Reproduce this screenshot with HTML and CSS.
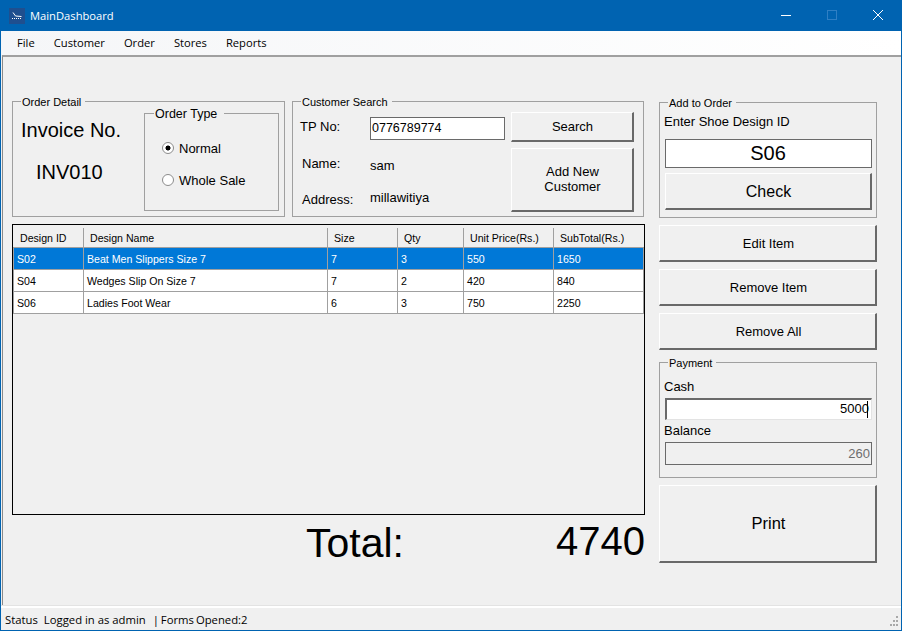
FILE: index.html
```html
<!DOCTYPE html>
<html lang="en">
<head>
  <meta charset="UTF-8">
  <meta name="viewport" content="width=device-width, initial-scale=1.0">
  <title>MainDashboard</title>
  <link rel="stylesheet" href="styles.css">
</head>
<body>
  <div class="window">
    <div class="titlebar">
      <svg class="app-icon" width="16" height="16" viewBox="0 0 16 16">
        <rect width="16" height="16" fill="#1f4f8f"/>
        <path d="M4 4.5 L6.5 8 L12.5 8.5" stroke="#fff" fill="none"/>
        <path d="M3 10.5 H13" stroke="#fff" stroke-dasharray="1 1"/>
      </svg>
      <span class="title-text">MainDashboard</span>
      <div class="controls">
        <svg width="46" height="31" viewBox="0 0 46 31"><path d="M18 15.5 H28" stroke="#fff"/></svg>
        <svg width="46" height="31" viewBox="0 0 46 31"><rect x="18.5" y="10.5" width="9" height="9" stroke="#2f7fc4" fill="none"/></svg>
        <svg width="46" height="31" viewBox="0 0 46 31"><path d="M18 10 L28 20 M28 10 L18 20" stroke="#fff" fill="none"/></svg>
      </div>
    </div>

    <div class="menubar">
      <span>File</span>
      <span>Customer</span>
      <span>Order</span>
      <span>Stores</span>
      <span>Reports</span>
    </div>

    <div class="frame">
      <div class="left-col">
        <div class="top-row">
          <fieldset class="group order-detail">
            <legend>Order Detail</legend>
            <div class="invoice">
              <div class="invoice-label">Invoice No.</div>
              <div class="invoice-no">INV010</div>
            </div>
            <fieldset class="group order-type">
              <legend>Order Type</legend>
              <div class="radio-row first"><span class="radio checked"></span>Normal</div>
              <div class="radio-row"><span class="radio"></span>Whole Sale</div>
            </fieldset>
          </fieldset>

          <fieldset class="group customer-search">
            <legend>Customer Search</legend>
            <div class="cust-info">
              <div class="cust-row tp">
                <span class="cust-label">TP No:</span>
                <div class="field tp-field">0776789774</div>
              </div>
              <div class="cust-row name">
                <span class="cust-label shift">Name:</span>
                <span class="cust-value low">sam</span>
              </div>
              <div class="cust-row address">
                <span class="cust-label shift low">Address:</span>
                <span class="cust-value">millawitiya</span>
              </div>
            </div>
            <div class="cust-buttons">
              <div class="btn search-btn">Search</div>
              <div class="btn add-btn">Add New<br>Customer</div>
            </div>
          </fieldset>
        </div>

        <div class="grid-wrap">
          <table class="grid">
            <colgroup>
              <col class="c1"><col class="c2"><col class="c3"><col class="c4"><col class="c5"><col class="c6">
            </colgroup>
            <thead>
              <tr>
                <th>Design ID</th><th>Design Name</th><th>Size</th><th>Qty</th><th>Unit Price(Rs.)</th><th>SubTotal(Rs.)</th>
              </tr>
            </thead>
            <tbody>
              <tr class="selected">
                <td>S02</td><td>Beat Men Slippers Size 7</td><td>7</td><td>3</td><td>550</td><td>1650</td>
              </tr>
              <tr>
                <td>S04</td><td>Wedges Slip On Size 7</td><td>7</td><td>2</td><td>420</td><td>840</td>
              </tr>
              <tr>
                <td>S06</td><td>Ladies Foot Wear</td><td>6</td><td>3</td><td>750</td><td>2250</td>
              </tr>
            </tbody>
          </table>
        </div>

        <div class="total-row">
          <span class="total-label">Total:</span>
          <span class="total-value">4740</span>
        </div>
      </div>

      <div class="right-col">
        <fieldset class="group add-order">
          <legend>Add to Order</legend>
          <div class="side-label first">Enter Shoe Design ID</div>
          <div class="field design-field">S06</div>
          <div class="btn check-btn">Check</div>
        </fieldset>
        <div class="btn side-btn">Edit Item</div>
        <div class="btn side-btn">Remove Item</div>
        <div class="btn side-btn">Remove All</div>
        <fieldset class="group payment">
          <legend>Payment</legend>
          <div class="side-label cash">Cash</div>
          <div class="field cash-field">5000<span class="caret"></span></div>
          <div class="side-label balance">Balance</div>
          <div class="field balance-field">260</div>
        </fieldset>
        <div class="btn print-btn">Print</div>
      </div>
    </div>

    <div class="statusbar">
      <span class="status-first">Status</span>
      <span>Logged in as admin</span>
      <span class="status-forms">| Forms Opened:2</span>
      <svg class="grip" width="10" height="11" viewBox="0 0 10 11" fill="#a8a8a8">
        <rect x="7" y="0" width="2" height="2"/>
        <rect x="4" y="4" width="2" height="2"/><rect x="7" y="4" width="2" height="2"/>
        <rect x="1" y="8" width="2" height="2"/><rect x="4" y="8" width="2" height="2"/><rect x="7" y="8" width="2" height="2"/>
      </svg>
    </div>
  </div>
</body>
</html>
```

FILE: styles.css
```css
* {
  box-sizing: border-box;
}

body {
  margin: 0;
  background-color: #fff;
  font-family: "Liberation Sans", Arial, sans-serif;
  font-size: 13px;
  color: #000;
}

.window {
  display: flex;
  flex-direction: column;
  width: 902px;
  height: 631px;
  border-left: 1px solid #0063b1;
  border-right: 1px solid #0063b1;
  border-bottom: 1px solid #0063b1;
  background-color: #f0f0f0;
}

.titlebar {
  display: flex;
  align-items: center;
  height: 31px;
  flex: none;
  padding-left: 8px;
  background-color: #0063b1;
  color: #fff;
}

.title-text {
  margin-left: 5px;
  font-family: "Open Sans", sans-serif;
  font-size: 11.2px;
}

.controls {
  display: flex;
  margin-left: auto;
}

.controls svg {
  display: block;
}

.menubar {
  display: flex;
  gap: 19px;
  align-items: center;
  height: 24px;
  flex: none;
  padding: 0 0 2px 16px;
  background: linear-gradient(to right, #f5f6f8, #fff);
  font-family: "Open Sans", sans-serif;
  font-size: 11.2px;
}

.frame {
  display: grid;
  grid-template-columns: 633px 218px;
  column-gap: 14px;
  flex: 1;
  margin-left: 1px;
  padding: 38px 0 0 9px;
  border-top: 2px solid #a0a0a0;
  border-left: 1px solid #8a8a8a;
  background-color: #f0f0f0;
}

/* group boxes */
.group {
  min-width: 0;
  margin: 0;
  border: 1px solid #a0a0a0;
}

.group legend {
  padding: 2px 4px 0 1px;
  font-size: 11px;
  line-height: 11px;
}

.top-row {
  display: flex;
  gap: 7px;
}

.order-detail {
  display: flex;
  width: 273px;
  height: 122px;
  padding: 0 5px 0 9px;
}

.order-detail > legend {
  margin-left: -1px;
}

.invoice {
  width: 122px;
}

.invoice-label {
  margin-top: 10px;
  margin-left: -1px;
  font-size: 20px;
  line-height: 24px;
}

.invoice-no {
  margin-top: 18px;
  margin-left: 14px;
  font-size: 20px;
  line-height: 24px;
}

.order-type {
  width: 135px;
  height: 105px;
  margin-top: -2px;
  padding: 0 0 0 17px;
}

.order-type legend {
  margin-left: -8px;
  padding: 2px 7px 0 1px;
  font-size: 12.5px;
  line-height: 12px;
}

.radio-row {
  display: flex;
  align-items: center;
  gap: 5px;
  height: 16px;
  margin-top: 16px;
}

.radio-row.first {
  margin-top: 20px;
}

.radio {
  display: block;
  width: 12px;
  height: 12px;
  border: 1px solid #8c8c8c;
  border-radius: 50%;
  background-color: #fff;
}

.radio.checked {
  background: radial-gradient(circle, #000 0, #000 2.2px, #fff 2.8px);
}

.customer-search {
  display: flex;
  width: 352px;
  height: 122px;
  padding: 0 0 0 8px;
}

.cust-info {
  width: 210px;
}

.cust-row {
  display: grid;
  grid-template-columns: 69px 135px;
  line-height: 16px;
}

.cust-row.tp {
  align-items: center;
  margin-top: 9px;
}

.cust-row.tp .cust-label {
  margin-left: -1px;
  padding-bottom: 4px;
}

.cust-row.name {
  margin-top: 16px;
}

.cust-row.address {
  margin-top: 16px;
}

.cust-label.shift {
  margin-left: 1px;
}

.low {
  padding-top: 2px;
}

.cust-buttons {
  display: flex;
  flex-direction: column;
  gap: 6px;
  width: 123px;
  margin-top: 4px;
}

/* inputs */
.field {
  border: 1px solid #6a6a6a;
  background-color: #fff;
}

.tp-field {
  height: 23px;
  padding-left: 1px;
  font-size: 12.5px;
  line-height: 21px;
}

.design-field {
  height: 29px;
  margin-top: 10px;
  padding-right: 1px;
  font-size: 20px;
  line-height: 27px;
  text-align: center;
}

.cash-field {
  position: relative;
  height: 22px;
  margin-top: 4px;
  padding-right: 2px;
  border-width: 2px 1px 1px 2px;
  border-color: #6a6a6a #e3e3e3 #e3e3e3 #6a6a6a;
  line-height: 18px;
  text-align: right;
}

.caret {
  position: absolute;
  top: 1px;
  right: 3px;
  width: 1px;
  height: 17px;
  background-color: #000;
}

.balance-field {
  height: 23px;
  margin-top: 4px;
  padding-right: 1px;
  background-color: #f0f0f0;
  color: #6d6d6d;
  line-height: 21px;
  text-align: right;
}

/* buttons */
.btn {
  display: flex;
  align-items: center;
  justify-content: center;
  padding-left: 1px;
  border-style: solid;
  border-width: 1px 2px 2px 1px;
  border-color: #fff #696969 #696969 #fff;
  background-color: #f0f0f0;
  line-height: 15px;
  text-align: center;
}

.search-btn {
  height: 30px;
}

.add-btn {
  height: 64px;
  padding-bottom: 2px;
}

.check-btn {
  height: 37px;
  margin-top: 5px;
  font-size: 16px;
}

.side-btn {
  height: 37px;
  padding-left: 2px;
}

.print-btn {
  height: 78px;
  padding-left: 2px;
  font-size: 16.5px;
}

/* order lines */
.grid-wrap {
  height: 291px;
  margin-top: 7px;
  border: 1px solid #000;
  background-color: #f0f0f0;
}

.grid {
  width: 631px;
  table-layout: fixed;
  border-spacing: 0;
  font-size: 10.6px;
}

.c1 { width: 71px; }
.c2 { width: 244px; }
.c3 { width: 70px; }
.c4 { width: 66px; }
.c5 { width: 90px; }
.c6 { width: 90px; }

.grid th {
  height: 23px;
  padding: 3px 0 0 6px;
  border-bottom: 1px solid #a0a0a0;
  background: linear-gradient(#a0a0a0, #a0a0a0) right 0 bottom 0 / 1px 19px no-repeat;
  font-weight: normal;
  text-align: left;
}

.grid th:first-child {
  padding-left: 7px;
}

.grid th:last-child {
  background: none;
}

.grid td {
  height: 22px;
  padding: 0 0 0 3px;
  border-right: 1px solid #a0a0a0;
  border-bottom: 1px solid #a0a0a0;
  background-color: #fff;
}

.grid td:first-child {
  border-left: 1px solid #a0a0a0;
}

.grid .selected td {
  background-color: #0078d7;
  color: #fff;
}

.total-row {
  display: flex;
  justify-content: space-between;
  margin-top: 3px;
  padding-left: 294px;
  line-height: 46px;
}

.total-label {
  margin-top: 2px;
  font-size: 41px;
}

.total-value {
  font-size: 40px;
}

/* right column */
.right-col {
  display: flex;
  flex-direction: column;
  gap: 7px;
  padding-top: 1px;
}

.add-order,
.payment {
  flex: none;
  height: 122px;
  padding: 0 4px 0 5px;
}

.add-order legend,
.payment legend {
  margin-left: 3px;
}

.payment {
  margin-top: -1px;
}

.side-label {
  margin-left: -1px;
  line-height: 14px;
}

.side-label.first {
  margin-top: 6px;
}

.side-label.cash {
  margin-top: 11px;
}

.side-label.balance {
  margin-top: 4px;
}

.statusbar {
  display: flex;
  align-items: center;
  gap: 7px;
  flex: none;
  height: 24px;
  padding-left: 4px;
  border-top: 2px solid #fff;
  box-shadow: 0 -1px 0 #e3e3e3;
  font-family: "Open Sans", sans-serif;
  font-size: 11.3px;
}

.status-first {
  margin-right: -1px;
}

.status-forms {
  word-spacing: -1px;
}

.grip {
  margin-left: auto;
  margin-right: 2px;
  margin-top: 4px;
}
```
